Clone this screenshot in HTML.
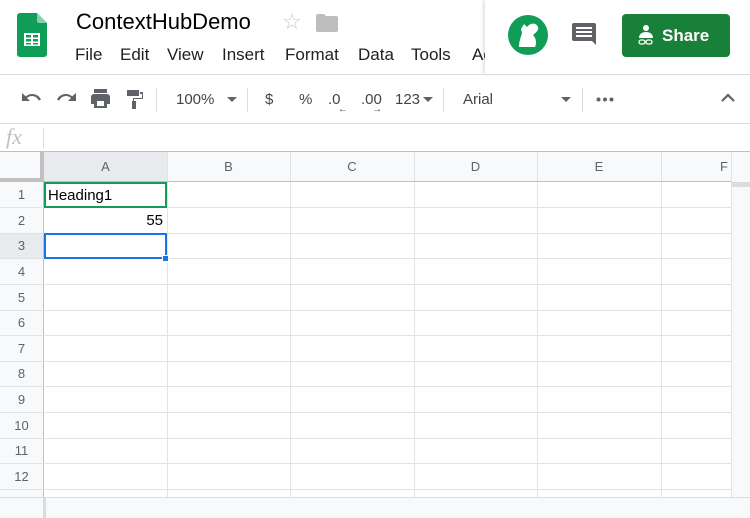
<!DOCTYPE html>
<html><head><meta charset="utf-8"><style>
*{margin:0;padding:0;box-sizing:border-box}
body{width:750px;height:518px;overflow:hidden;background:#fff;font-family:"Liberation Sans",Arial,sans-serif;position:relative;color:#202124}
.a{position:absolute}
.m{position:absolute;top:45px;font-size:17px;color:#202124;white-space:nowrap}
.tb{font-size:15px;color:#444}
.vl{position:absolute;width:1px;background:#e2e3e3}
.hl{position:absolute;height:1px;background:#e2e3e3;left:0;width:731px}
.ch{position:absolute;top:152px;height:30px;line-height:30px;text-align:center;font-size:13px;color:#5f6368}
.rh{position:absolute;left:0;width:43px;text-align:center;font-size:13px;color:#5f6368}
</style></head><body>
<svg class="a" style="left:17px;top:13px" width="30" height="44" viewBox="0 0 30 44">
<path d="M3 0h17l10 10v31a3 3 0 0 1-3 3H3a3 3 0 0 1-3-3V3a3 3 0 0 1 3-3z" fill="#0f9d58"/>
<path d="M20 0l10 10h-8a2 2 0 0 1-2-2z" fill="#87ceac"/>
<rect x="7" y="20" width="16" height="13" fill="#fff"/>
<g fill="#0f9d58"><rect x="9" y="22" width="5" height="2.5"/><rect x="16" y="22" width="5" height="2.5"/><rect x="9" y="26" width="5" height="2.5"/><rect x="16" y="26" width="5" height="2.5"/><rect x="9" y="30" width="5" height="1.5"/><rect x="16" y="30" width="5" height="1.5"/></g>
</svg>
<div class="a" style="left:76px;top:9px;font-size:22px;color:#000">ContextHubDemo</div>
<div class="a" style="left:282px;top:9px;font-size:22px;color:#ccc">☆</div>
<svg class="a" style="left:316px;top:14px" width="22" height="18" viewBox="0 0 22 18"><path d="M0 2a2 2 0 0 1 2-2h6l2 2h10a2 2 0 0 1 2 2v12a2 2 0 0 1-2 2H2a2 2 0 0 1-2-2z" fill="#bdbdbd"/></svg>
<div class="m" style="left:75px">File</div>
<div class="m" style="left:120px">Edit</div>
<div class="m" style="left:167px">View</div>
<div class="m" style="left:222px">Insert</div>
<div class="m" style="left:285px">Format</div>
<div class="m" style="left:358px">Data</div>
<div class="m" style="left:411px">Tools</div>
<div class="m" style="left:472px">Add-ons</div>
<div class="a" style="left:485px;top:0;width:265px;height:74px;background:#fff;box-shadow:-2px 0 3px rgba(0,0,0,.12)"></div>
<svg class="a" style="left:508px;top:15px" width="40" height="40" viewBox="0 0 40 40"><circle cx="20" cy="20" r="20" fill="#0f9d58"/><path d="M11 32c0-6 2-10 3-14l-1-4 3-5 3 3c3-4 9-5 11 0 1 4-3 6-5 8 3 3 4 8 2 12z" fill="#fff"/></svg>
<svg class="a" style="left:572px;top:22px" width="26" height="26" viewBox="0 0 26 26"><path d="M2 1h20a2 2 0 0 1 2 2v20l-4-4H2a2 2 0 0 1-2-2V3a2 2 0 0 1 2-2z" fill="#5f6368"/><rect x="4" y="5" width="16" height="2" fill="#fff"/><rect x="4" y="9" width="16" height="2" fill="#fff"/><rect x="4" y="13" width="16" height="2" fill="#fff"/></svg>
<div class="a" style="left:622px;top:14px;width:108px;height:43px;background:#188038;border-radius:4px;color:#fff;font-size:17px;font-weight:bold;line-height:43px;padding-left:40px">Share</div>
<svg class="a" style="left:637px;top:24px" width="18" height="22" viewBox="0 0 18 22"><circle cx="9" cy="4" r="3" fill="#fff"/><path d="M2 14c0-4 3-6 7-6s7 2 7 6z" fill="#fff"/><rect x="2" y="16" width="6" height="4" rx="2" fill="none" stroke="#fff" stroke-width="1.3"/><rect x="9" y="16" width="6" height="4" rx="2" fill="none" stroke="#fff" stroke-width="1.3"/></svg>
<div class="a" style="left:0;top:74px;width:750px;height:1px;background:#dadce0"></div>
<!-- toolbar -->
<svg class="a" style="left:21px;top:91px" width="22" height="16" viewBox="0 0 22 16" fill="#5f6368"><path d="M1 2v8h8L6 7c1.6-1.3 3.2-2 5-2 3 0 5.5 1.8 6.7 4.5L20 8.6C18.5 5 15 3 11 3 8.7 3 6.6 3.9 4.8 5.4z"/></svg>
<svg class="a" style="left:55px;top:91px" width="22" height="16" viewBox="0 0 22 16" fill="#5f6368"><path d="M21 2v8h-8l3-3c-1.6-1.3-3.2-2-5-2-3 0-5.5 1.8-6.7 4.5L2 8.6C3.5 5 7 3 11 3c2.3 0 4.4.9 6.2 2.4z"/></svg>
<svg class="a" style="left:90px;top:89px" width="21" height="20" viewBox="0 0 21 20" fill="#5f6368"><path d="M17 5H4a3 3 0 0 0-3 3v7h3v4h13v-4h3V8a3 3 0 0 0-3-3zM14 17H7v-5h7zM4 0h13v4H4z"/></svg>
<svg class="a" style="left:126px;top:89px" width="18" height="21" viewBox="0 0 18 21" fill="#5f6368"><path d="M1 1h12v6H1zM14 3h3v7H8v2h2v8H6v-8h1V9h9V5h-2z"/></svg>
<div class="a" style="left:156px;top:88px;width:1px;height:24px;background:#dadce0"></div>
<div class="a tb" style="left:176px;top:91px">100%</div>
<div class="a" style="left:227px;top:97px;border:5px solid transparent;border-top-color:#5f6368"></div>
<div class="a" style="left:247px;top:88px;width:1px;height:24px;background:#dadce0"></div>
<div class="a tb" style="left:265px;top:91px">$</div>
<div class="a tb" style="left:299px;top:91px">%</div>
<div class="a tb" style="left:328px;top:91px">.0</div>
<div class="a tb" style="left:338px;top:104px;font-size:10px">←</div>
<div class="a tb" style="left:361px;top:91px">.00</div>
<div class="a tb" style="left:372px;top:104px;font-size:10px">→</div>
<div class="a tb" style="left:395px;top:91px">123</div>
<div class="a" style="left:423px;top:97px;border:5px solid transparent;border-top-color:#5f6368"></div>
<div class="a" style="left:443px;top:88px;width:1px;height:24px;background:#dadce0"></div>
<div class="a tb" style="left:463px;top:91px">Arial</div>
<div class="a" style="left:561px;top:97px;border:5px solid transparent;border-top-color:#5f6368"></div>
<div class="a" style="left:582px;top:88px;width:1px;height:24px;background:#dadce0"></div>
<svg class="a" style="left:596px;top:97px" width="18" height="5"><circle cx="2.5" cy="2.5" r="2" fill="#5f6368"/><circle cx="9" cy="2.5" r="2" fill="#5f6368"/><circle cx="15.5" cy="2.5" r="2" fill="#5f6368"/></svg>
<svg class="a" style="left:720px;top:92px" width="16" height="12" viewBox="0 0 16 12"><path d="M2 9l6-6 6 6" fill="none" stroke="#5f6368" stroke-width="2.2"/></svg>
<div class="a" style="left:0;top:123px;width:750px;height:1px;background:#dadce0"></div>
<div class="a" style="left:6px;top:124px;font-size:22px;font-style:italic;color:#c0c0c0;font-family:'Liberation Serif',serif">fx</div>
<div class="a" style="left:43px;top:128px;width:1px;height:20px;background:#dadce0"></div>
<div class="a" style="left:0;top:151px;width:750px;height:1px;background:#c0c0c0"></div>
<!-- grid -->
<div class="a" style="left:0;top:152px;width:731px;height:30px;background:#f8f9fa"></div>
<div class="a" style="left:44px;top:152px;width:123px;height:30px;background:#e8eaed"></div>
<div class="a" style="left:0;top:182px;width:44px;height:316px;background:#f8f9fa"></div>
<div class="a" style="left:0;top:233px;width:44px;height:26px;background:#e8eaed"></div>
<div class="a" style="left:731px;top:152px;width:19px;height:366px;background:#f8f9fa;border-left:1px solid #e2e3e3"></div>
<div class="a" style="left:732px;top:182px;width:18px;height:5px;background:#dadce0"></div>
<div class="ch" style="left:44px;width:123px">A</div>
<div class="ch" style="left:167px;width:123px">B</div>
<div class="ch" style="left:290px;width:124px">C</div>
<div class="ch" style="left:414px;width:123px">D</div>
<div class="ch" style="left:537px;width:124px">E</div>
<div class="ch" style="left:661px;width:70px;text-align:right;padding-right:3px">F</div>
<div class="vl" style="left:167px;top:152px;height:346px"></div>
<div class="vl" style="left:290px;top:152px;height:346px"></div>
<div class="vl" style="left:414px;top:152px;height:346px"></div>
<div class="vl" style="left:537px;top:152px;height:346px"></div>
<div class="vl" style="left:661px;top:152px;height:346px"></div>
<div class="a" style="left:43px;top:182px;width:1px;height:316px;background:#c0c0c0"></div>
<div class="a" style="left:0;top:181px;width:731px;height:1px;background:#c0c0c0"></div>
<div class="a" style="left:40px;top:152px;width:4px;height:30px;background:#c0c0c0"></div>
<div class="a" style="left:0;top:178px;width:44px;height:4px;background:#c0c0c0"></div>
<div class="hl" style="top:207px"></div><div class="hl" style="top:233px"></div><div class="hl" style="top:258px"></div><div class="hl" style="top:284px"></div><div class="hl" style="top:310px"></div><div class="hl" style="top:335px"></div><div class="hl" style="top:361px"></div><div class="hl" style="top:386px"></div><div class="hl" style="top:412px"></div><div class="hl" style="top:438px"></div><div class="hl" style="top:463px"></div><div class="hl" style="top:489px"></div>
<div class="rh" style="top:187px">1</div><div class="rh" style="top:213px">2</div><div class="rh" style="top:238px">3</div><div class="rh" style="top:264px">4</div><div class="rh" style="top:290px">5</div><div class="rh" style="top:315px">6</div><div class="rh" style="top:341px">7</div><div class="rh" style="top:366px">8</div><div class="rh" style="top:392px">9</div><div class="rh" style="top:418px">10</div><div class="rh" style="top:443px">11</div><div class="rh" style="top:469px">12</div>
<div class="a" style="left:0;top:497px;width:750px;height:21px;background:#f8f9fa;border-top:1px solid #dadce0"></div>
<div class="a" style="left:43px;top:498px;width:3px;height:20px;background:#dadce0"></div>
<div class="a" style="left:44px;top:182px;width:123px;height:26px;border:2px solid #0f9d58"></div>
<div class="a" style="left:48px;top:187px;font-size:15px;color:#000">Heading1</div>
<div class="a" style="left:44px;top:212px;width:119px;text-align:right;font-size:15px;color:#000">55</div>
<div class="a" style="left:44px;top:233px;width:123px;height:26px;border:2px solid #1a73e8"></div>
<div class="a" style="left:162px;top:255px;width:7px;height:7px;background:#1a73e8;border:1px solid #fff"></div>
</body></html>
